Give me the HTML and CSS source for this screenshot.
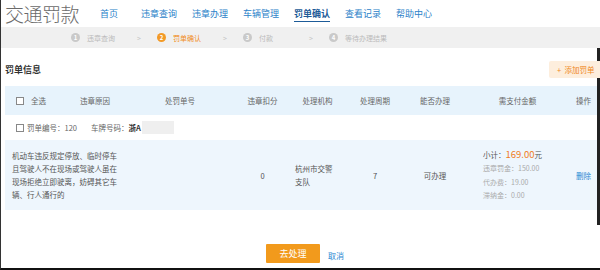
FILE: index.html
```html
<!DOCTYPE html>
<html>
<head>
    <title>交通罚款 - 罚单确认</title>
    <link rel="stylesheet" href="styles.css">
</head>
<body>
    <div class="page">
        <div class="topbar">
            <div class="logo">交通罚款</div>
            <nav class="nav">
                <a href="#">首页</a>
                <a href="#">违章查询</a>
                <a href="#">违章办理</a>
                <a href="#">车辆管理</a>
                <a href="#" class="active">罚单确认</a>
                <a href="#">查看记录</a>
                <a href="#">帮助中心</a>
            </nav>
        </div>

        <div class="steps">
            <div class="step"><span class="num">1</span>违章查询</div>
            <div class="sep">&gt;</div>
            <div class="step current"><span class="num">2</span>罚单确认</div>
            <div class="sep">&gt;</div>
            <div class="step"><span class="num">3</span>付款</div>
            <div class="sep">&gt;</div>
            <div class="step"><span class="num">4</span>等待办理结果</div>
        </div>

        <div class="panel">
            <div class="panel-head">
                <h3>罚单信息</h3>
                <button class="btn-add">+&nbsp;&nbsp;添加罚单</button>
            </div>

            <div class="row thead">
                <div class="c-check"><span class="box"></span>全选</div>
                <div class="center">违章原因</div>
                <div class="center">处罚单号</div>
                <div class="center">违章扣分</div>
                <div class="center">处理机构</div>
                <div class="center">处理周期</div>
                <div class="center">能否办理</div>
                <div class="center">需支付金额</div>
                <div class="center">操作</div>
            </div>

            <div class="order">
                <span class="box"></span>
                <span class="order-no">罚单编号：120</span>
                <span class="plate">车牌号码：<b>浙A</b></span>
                <span class="mask"></span>
            </div>

            <div class="row tbody">
                <div class="reason">机动车违反规定停放、临时停车且驾驶人不在现场或驾驶人虽在现场拒绝立即驶离，妨碍其它车辆、行人通行的</div>
                <div></div>
                <div class="center">0</div>
                <div class="org">杭州市交警支队</div>
                <div class="center">7</div>
                <div class="center">可办理</div>
                <div class="amount">
                    <div class="total">小计：<em>169.00</em>元</div>
                    <div>违章罚金：150.00</div>
                    <div>代办费：19.00</div>
                    <div>滞纳金：0.00</div>
                </div>
                <div class="center"><a href="#" class="link">删除</a></div>
            </div>
        </div>

        <div class="actions">
            <button class="btn-go">去处理</button>
            <a href="#" class="link">取消</a>
        </div>
    </div>
</body>
</html>
```

FILE: styles.css
```css
body {
    margin: 0;
    font-family: "Noto Sans CJK SC", "Noto Sans", sans-serif;
    font-size: 7.5px;
    color: #555;
    background: #fff;
}

a {
    text-decoration: none;
}

.page {
    width: 599px;
    height: 268px;
    border-left: 1px solid #333;
    border-bottom: 2px solid #111;
    overflow: hidden;
}

/* cabeçalho */
.topbar {
    display: flex;
    align-items: center;
    height: 27px;
}

.logo {
    padding-left: 4px;
    font-size: 19px;
    line-height: 27px;
    color: #6a6a6a;
    font-weight: 300;
    letter-spacing: -0.5px;
}

.nav {
    display: flex;
    margin-left: 21px;
    padding-top: 1px;
    font-size: 9px;
}

.nav a {
    color: #2b82c9;
    margin-right: 15px;
    line-height: 14px;
}

.nav a:first-child {
    margin-right: 23px;
}

.nav a.active {
    color: #1d5b98;
    font-weight: bold;
    border-bottom: 1px solid #1d5b98;
}

/* passos */
.steps {
    display: flex;
    align-items: center;
    height: 21px;
    background: #f0f0f0;
    padding-left: 70px;
    font-size: 7px;
    color: #bbb;
}

.step {
    display: flex;
    align-items: center;
    width: 64px;
}

.step .num {
    width: 9px;
    height: 9px;
    border-radius: 50%;
    background: #c9c9c9;
    color: #fff;
    font-size: 6px;
    font-weight: bold;
    line-height: 9px;
    text-align: center;
    margin-right: 7px;
}

.step.current {
    color: #f08c1c;
}

.step.current .num {
    background: #f39a26;
}

.sep {
    width: 20px;
    padding-left: 2px;
    color: #c4c4c4;
}

/* painel */
.panel {
    padding: 0 0 15px 4px;
    border-right: 3px solid #222;
}

.panel-head {
    display: flex;
    justify-content: space-between;
    align-items: center;
    height: 38px;
    padding-top: 4px;
    box-sizing: border-box;
}

.panel-head h3 {
    margin: 0;
    font-size: 9px;
    color: #333;
}

.btn-add {
    width: 52px;
    height: 17px;
    margin-right: -4px;
    border: none;
    border-radius: 2px 0 0 2px;
    background: #fdeedd;
    color: #f08a24;
    font-family: inherit;
    font-size: 7.5px;
    padding: 0 0 0 8px;
    text-align: left;
    white-space: nowrap;
}

.row {
    display: grid;
    grid-template-columns: 60px 60px 110px 55px 55px 60px 60px 105px 27px;
    align-items: center;
}

.center {
    text-align: center;
}

.thead {
    height: 29px;
    background: #e7f3fc;
    color: #666;
}

.c-check {
    display: flex;
    align-items: center;
    padding-left: 11px;
}

.box {
    display: inline-block;
    width: 6px;
    height: 6px;
    border: 1px solid #888;
    background: #fff;
    margin-right: 7px;
}

.order {
    display: flex;
    align-items: center;
    height: 25px;
    padding-left: 11px;
    color: #666;
}

.order .box {
    margin-right: 3px;
}

.order-no {
    margin-right: 14px;
}

.plate b {
    color: #333;
}

.mask {
    width: 32px;
    height: 13px;
    margin-left: 1px;
    background: #efefef;
}

.tbody {
    height: 70px;
    background: #eef6fd;
    color: #555;
}

.reason {
    grid-column: span 2;
    width: 106px;
    padding-left: 7px;
    line-height: 13px;
}

.org {
    padding-left: 5px;
    padding-right: 10px;
    line-height: 13px;
}

.amount {
    padding-left: 18px;
    line-height: 13.3px;
    color: #aaa;
    font-size: 7px;
}

.amount .total {
    color: #555;
    font-size: 7.5px;
    margin-bottom: 1px;
}

.amount em {
    font-style: normal;
    font-size: 9.5px;
    color: #f07c1e;
}

.link {
    color: #2b88d2;
}

/* ações */
.actions {
    display: flex;
    align-items: center;
    padding: 19px 0 0 265px;
}

.btn-go {
    width: 54px;
    height: 19px;
    border: none;
    border-radius: 1px;
    background: #f29a1c;
    color: #fff;
    font-family: inherit;
    font-size: 9px;
    margin-right: 8px;
    padding: 0;
}

.actions .link {
    margin-top: 3px;
    font-size: 8px;
}
```
